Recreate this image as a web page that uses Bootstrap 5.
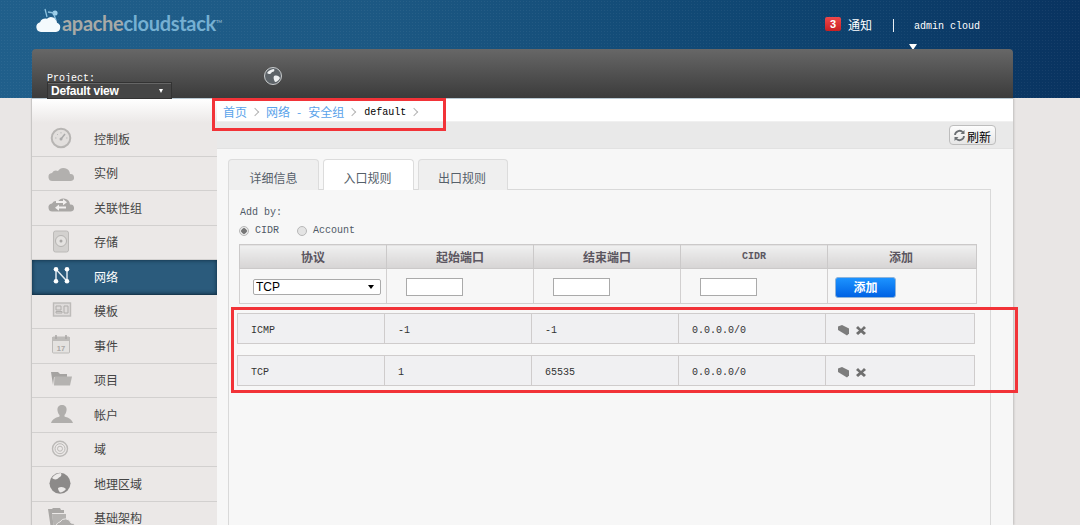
<!DOCTYPE html>
<html lang="zh">
<head>
<meta charset="utf-8">
<title>CloudStack</title>
<link href="https://cdn.jsdelivr.net/npm/bootstrap@5.3.0/dist/css/bootstrap.min.css" rel="stylesheet">
<style>
html,body{height:525px;overflow:hidden}
body{background:#e9e6e5;font-family:"Liberation Sans","Noto Sans CJK SC",sans-serif;font-size:12px;color:#333;position:relative}
.zh{font-family:"Noto Sans CJK SC","Liberation Sans",sans-serif;font-size:12px;line-height:16px}
.mono{font-family:"Liberation Mono","Noto Sans CJK SC",monospace;font-size:10px;line-height:12px}
.topzone{height:98px;background-color:#134a76;background-image:radial-gradient(rgba(255,255,255,.05) 1px,transparent 1px),linear-gradient(90deg,#205f8b 0,#1c5883 35%,#0f4672 70%,#093360 100%);background-size:3px 3px,100% 100%}
.topbar{height:49px;padding-left:36px;padding-right:100px;position:relative}
.logotxt{font-family:"Lato","Liberation Sans",sans-serif;font-weight:700;font-size:20px;letter-spacing:-.3px;line-height:24px;margin-left:1px;margin-top:10px}
.lg-a{color:#a8aaa6}.lg-b{color:#76b0d2}
.lg-tm{font-size:4px;vertical-align:super;color:#8fb5cc;letter-spacing:0}
.nbadge{width:16px;height:14px;padding:0;font-size:11px;line-height:14px;border-radius:2px;background:linear-gradient(#f0484a,#c81f22);color:#fff;margin-right:7px;margin-top:17px}
.ntxt{color:#fff;margin-top:17px}
.sep{color:#fff;margin:19px 20px 0 21px;width:1px;height:13px;background:#e8eef3}
.usr{color:#fff;margin-top:21px}
.usrtri{position:absolute;left:909px;top:44px;width:0;height:0;border-left:4.5px solid transparent;border-right:4.5px solid transparent;border-top:6px solid #fff}
.darkbar{width:981px;height:49px;margin-left:32px;background:linear-gradient(#676767,#3b3b3b);border-radius:4px 4px 0 0;padding-left:15px;padding-top:23px;position:relative}
.prj{color:#fff;height:11px;padding-top:1px}
.prjsel{width:125px;height:17px;margin-top:-1px;background:#454545;border:1px solid #333;color:#fff;font-weight:700;font-size:12px;letter-spacing:-.2px;line-height:15px;padding:1px 0 0 3px;box-shadow:0 1px 0 #666 inset;position:relative;z-index:2}
.prjsel i{display:block;width:0;height:0;border-left:2.5px solid transparent;border-right:2.5px solid transparent;border-top:4px solid #fff;margin-right:8px}
.globe{position:absolute;left:232px;top:18px}
.shell{width:981px;margin-left:32px;height:427px;box-shadow:1px 0 2px rgba(0,0,0,.18),-1px 0 1px rgba(0,0,0,.12)}
.side{width:185px;background:#ebe8e7;padding-top:23px;background-image:linear-gradient(#fff 0,#ebe8e7 24px);background-repeat:no-repeat;background-size:100% 30px;border-top:1px solid #b9c9d3;flex:none}
.nitem{height:34.5px;padding-left:15px;border-bottom:1.5px solid #d2d0cf;color:#444;box-sizing:border-box}
.nitem svg{flex:none}
.nitem span{margin-left:19px}
.nitem.on{background:#2b5b7c;color:#fff;box-shadow:0 0 4px #0e2a3d inset;border-bottom-color:#17384f}
.mainp{flex:1;background:#f7f7f7;min-width:0;overflow:hidden;border-top:1px solid #b9c9d3}
.crumb{height:23px;background:#fff;padding-left:6px;padding-top:3px;border-bottom:1px solid #f0f0f0}
.crumb a{color:#5aa3ea;text-decoration:none;white-space:pre}
.crumb .dash{margin:0 7px}
.crumb .gt{width:6px;height:6px;border-top:1px solid #b5b5b5;border-right:1px solid #b5b5b5;transform:rotate(45deg);margin:0 8px 0 5px}
.crumb .cur{color:#000;font-size:10px;margin-left:1px;position:relative;top:1px}
.tools{height:27px;background:#e9e9e9;border-bottom:1px solid #e2e2e2;padding-right:17px}
.rbtn{width:47px;height:20px;padding:0;border:1px solid #bdbdbd;border-radius:4px;background:linear-gradient(#fdfdfd,#e6e6e6);color:#000;font-size:12px;line-height:18px}
.rbtn b{font-weight:400;position:relative;top:2px}
.rbtn svg{margin-right:1px;margin-left:3px}
.tabsw{padding:10px 0 0 11px}
.tabx{margin:0;padding:0;list-style:none;height:31px;position:relative;z-index:1}
.tabx li{height:31px;border:1px solid #dcdcdc;border-bottom:0;border-radius:4px 4px 0 0;background:#efefef;color:#56606a;text-align:center;line-height:16px;padding-top:10px}
.tabx li+li{margin-left:4px}
.tabx .t1{width:91px}.tabx .t2{width:91px;background:#fff;color:#55606a;padding-right:2px}.tabx .t3{width:90px;padding-right:2px}
.tabbox{width:763px;margin-left:11px;border:1px solid #d9d9d9;margin-top:-1px;height:340px;padding:17px 14px 0 10px;color:#566}
.addby{color:#4f5a66;height:12px;margin-left:1px}
.rads{height:18px;margin-top:3px;color:#4f5a66}
.rad{appearance:none;-webkit-appearance:none;width:10px;height:10px;border-radius:50%;border:1px solid #b8b8b8;background:#e4e4e4;margin:0 6px 0 0;flex:none}
.rad:checked{background:radial-gradient(#777 0,#777 2.5px,#e8e8e8 3px)}
.rad2{margin-left:18px}
.rulet{table-layout:fixed;width:737px;border-collapse:collapse;margin:0}
.rulet th{height:24px;padding:1px 0 0;background:linear-gradient(#f0f0f0,#d6d4d4);border:1px solid #cbc9c9;color:#5b5660;text-align:center;font-weight:700;vertical-align:middle}
.rulet th:last-child{padding-right:2px}
.rulet td{height:35px;padding:2px 0 0;border:1px solid #d2d0d0;border-top:0;vertical-align:middle;background:#f7f7f7}
.tsel{width:128px;height:16px;margin-left:13px;font-size:12px;line-height:14px;border:1px solid #aaa;border-radius:2px;background-color:#fff;padding:0 0 0 2px;color:#000;min-height:0;background-image:url("data:image/svg+xml,%3Csvg xmlns='http://www.w3.org/2000/svg' viewBox='0 0 6 4'%3E%3Cpath d='M0 0h6L3 4z' fill='%23000'/%3E%3C/svg%3E");background-position:right 6px center;background-size:6px 4px;font-family:"Liberation Sans",sans-serif;box-shadow:none}
.tinp{display:block;width:57px;height:18px;margin-left:19px;border:1px solid #aaa;border-radius:0;padding:0;background:#fff;min-height:0}
.addbtn{display:block;width:61px;height:21px;margin-left:7px;padding:0;border:1px solid #8fb4da;border-radius:3px;background:linear-gradient(#1c93ff,#0062e4);color:#fff;font-weight:700;font-size:12px;line-height:18px}
.datat{table-layout:fixed;width:737px;margin:0 0 0 -2px;border-collapse:collapse;background:#f0f0f2}
.datat td{height:30px;padding:5px 0 0 13px;border:1.5px solid #cfcccc;background:#f0f0f2;color:#333;vertical-align:middle}
.datat td:last-child{padding-left:11px;padding-top:2px}
.gap1{margin-top:9px}.gap2{margin-top:11px}
.redbox{position:absolute;border:3px solid #f23338;pointer-events:none;z-index:5}
.rb1{left:212px;top:98px;width:234px;height:33px}
.rb2{left:231px;top:307px;width:787px;height:86px}
</style>
</head>
<body>
<div class="topzone">
  <div class="topbar d-flex">
    <svg width="25" height="26" viewBox="0 0 25 26" class="mt-2" aria-label="logo"><path d="M5 24a5 5 0 0 1-1-9.800 5.500 5.500 0 0 1 7-3.500 6 6 0 0 1 10 4 4.800 4.800 0 0 1-1 9.300z" fill="#f4fafd"/><circle cx="19" cy="5" r="2.600" fill="#9fd0ea"/><path d="M9 1l2 8M12 4l6 1M18 7l2 5" stroke="#8cc2e0" stroke-width="1.300" fill="none"/></svg>
    <div class="logotxt"><span class="lg-a">apache</span><span class="lg-b">cloudstack</span><span class="lg-tm">TM</span></div>
    <div class="ms-auto d-flex align-items-start">
      <span class="badge nbadge">3</span>
      <span class="zh ntxt">通知</span>
      <span class="sep"></span>
      <span class="mono usr">admin cloud</span>
    </div>
    <span class="usrtri"></span>
  </div>
  <div class="darkbar">
    <div class="mono prj">Project:</div>
    <div class="prjsel d-flex align-items-center justify-content-between"><span>Default view</span><i></i></div>
    <svg class="globe" width="18" height="18" viewBox="0 0 18 18" aria-label="globe"><circle cx="9" cy="9" r="8.500" fill="#5d6368"/><circle cx="9" cy="9" r="8.500" fill="none" stroke="#c9cccd"/><path d="M3 6c2-3 5-4 7-4 1 1 0 3-2 3-1 2-3 3-5 1zM10 9c3-1 5 0 6 2-1 2-3 4-5 4-1-2-2-4-1-6z" fill="#eef0f1"/></svg>
  </div>
</div>
<div class="shell d-flex">
  <nav class="side">
    <div class="nitem d-flex align-items-center zh"><svg width="28" height="26" viewBox="0 0 28 26"><circle cx="14" cy="12" r="9.300" fill="#e2dfdd" stroke="#b7b5b3" stroke-width="2"/><path d="M14 13l4-5" stroke="#aaa" stroke-width="1.500"/><circle cx="14" cy="13" r="1.500" fill="#aaa"/><path d="M8 12h1.500M19 12h1.500M14 6v1.500M10 8l1 1" stroke="#bbb"/></svg><span>控制板</span></div>
    <div class="nitem d-flex align-items-center zh"><svg width="28" height="26" viewBox="0 0 28 26"><path d="M6 21a4 4 0 0 1-1-8 5 5 0 0 1 6-2 6.500 6.500 0 0 1 12 3 3.500 3.500 0 0 1 1 7z" fill="#b2b0ae"/></svg><span>实例</span></div>
    <div class="nitem d-flex align-items-center zh"><svg width="28" height="26" viewBox="0 0 28 26"><path d="M6 16.500a4 4 0 0 1-1-8 5 5 0 0 1 6-2 6.500 6.500 0 0 1 12 3 3.500 3.500 0 0 1 1 7z" fill="#a9a7a5"/><path d="M9 7h7V5l4 3.200-4 3V9H9zM19 12.500h-7v-2l-4 3.200 4 3v-2.200h7z" fill="#f2f0ef" transform="translate(0 -1)"/></svg><span>关联性组</span></div>
    <div class="nitem d-flex align-items-center zh"><svg width="28" height="26" viewBox="0 0 28 26"><rect x="6.500" y="2" width="15" height="21" rx="2" fill="#d3d1cf" stroke="#bcbab8"/><circle cx="14" cy="12" r="5.500" fill="#e4e2e0" stroke="#b5b3b1"/><circle cx="14" cy="12" r="1.500" fill="#a9a7a5"/></svg><span>存储</span></div>
    <div class="nitem on d-flex align-items-center zh"><svg width="28" height="26" viewBox="0 0 28 26"><path d="M9 5.300v12M9 5.300l11 12M20 5.300v12" stroke="#dfe9ef" stroke-width="1.500" fill="none"/><g fill="#fff"><circle cx="9" cy="5.300" r="2.300"/><circle cx="20" cy="5.300" r="2.300"/><circle cx="9" cy="17.300" r="2.300"/><circle cx="20" cy="17.300" r="2.300"/></g></svg><span>网络</span></div>
    <div class="nitem d-flex align-items-center zh"><svg width="28" height="26" viewBox="0 0 28 26"><rect x="6.500" y="5" width="17" height="13" fill="#dedbda" stroke="#bdbbb9" stroke-width="1.400"/><path d="M9 8h5v4H9zM17 8h4v7h-4zM9 13.500h6V15H9z" fill="none" stroke="#b0aeac"/></svg><span>模板</span></div>
    <div class="nitem d-flex align-items-center zh"><svg width="28" height="26" viewBox="0 0 28 26"><rect x="5.500" y="4" width="17" height="16" rx="1" fill="#e4e2e0" stroke="#bdbbb9"/><rect x="5" y="4" width="18" height="4" fill="#bdbbb9"/><path d="M9 2v4M19 2v4" stroke="#a9a7a5" stroke-width="1.500"/><text x="14" y="17.500" text-anchor="middle" font-size="7.500" font-weight="700" fill="#a9a7a5" font-family="Liberation Sans">17</text></svg><span>事件</span></div>
    <div class="nitem d-flex align-items-center zh"><svg width="28" height="26" viewBox="0 0 28 26"><path d="M4 5h7l2 2h7v3H7l-1 8z" fill="#a5a3a1"/><path d="M7.500 9.500H25L23 18.500H7z" fill="#b5b3b1"/></svg><span>项目</span></div>
    <div class="nitem d-flex align-items-center zh"><svg width="28" height="26" viewBox="0 0 28 26"><path d="M15 3c3.500 0 5 2.500 4.500 5.500-.3 2-1 3.500-2 4.500v1.500c3 1 7 2 8.500 6.500H4c1.500-4.500 5.500-5.500 8.500-6.500V13c-1-1-1.700-2.500-2-4.500C10 5.500 11.500 3 15 3z" fill="#b0aeac"/></svg><span>帐户</span></div>
    <div class="nitem d-flex align-items-center zh"><svg width="28" height="26" viewBox="0 0 28 26"><g fill="none" stroke="#bbb9b7"><circle cx="13" cy="12.700" r="7.500" stroke-width="1.400"/><circle cx="13" cy="12.700" r="5"/><circle cx="13" cy="12.700" r="2.500"/></g></svg><span>域</span></div>
    <div class="nitem d-flex align-items-center zh"><svg width="28" height="26" viewBox="0 0 28 26"><circle cx="13" cy="12.300" r="10.500" fill="#8c8a89"/><path d="M5 7c2-3 5-4.500 9-5 1 2 0 4-2 4.500-2 2.500-5 2.500-7 .5zM11 17c3-2 6-1 8 1-1.500 2-4 3.500-6 3.500-1-1-2-3-2-4.500z" fill="#eceae9"/></svg><span>地理区域</span></div>
    <div class="nitem d-flex align-items-center zh"><svg width="28" height="26" viewBox="0 0 28 26"><path d="M1 4h4l1-1h7l1 2h3v3H5l2 16H4z" fill="#a9a7a5"/><path d="M5 9h14v15H7z" fill="#b5b3b1"/><path d="M10 25a5 5 0 0 1 3-8 6 6 0 0 1 11 1 4 4 0 0 1 3 7z" fill="#aeacaa" stroke="#ebe8e7"/></svg><span>基础架构</span></div>
  </nav>
  <main class="mainp">
    <div class="crumb d-flex align-items-center zh">
      <a href="#">首页</a><i class="gt"></i><a href="#">网络<span class="dash">-</span>安全组</a><i class="gt"></i><span class="mono cur">default</span><i class="gt"></i>
    </div>
    <div class="tools d-flex align-items-center justify-content-end">
      <button class="btn rbtn d-flex align-items-center zh" type="button"><svg width="13" height="13" viewBox="0 0 13 13"><path d="M2 6a4.500 4.500 0 0 1 8-2.500M11 7a4.500 4.500 0 0 1-8 2.500" fill="none" stroke="#6b6f73" stroke-width="1.800"/><path d="M11.500 1v4h-4zM1.500 12V8h4z" fill="#6b6f73"/></svg><b>刷新</b></button>
    </div>
    <div class="tabsw">
      <ul class="tabx d-flex zh">
        <li class="t1">详细信息</li>
        <li class="t2">入口规则</li>
        <li class="t3">出口规则</li>
      </ul>
    </div>
    <div class="tabbox">
      <div class="mono addby">Add by:</div>
      <div class="d-flex align-items-center rads mono">
        <input class="rad" type="radio" name="ab" checked aria-label="CIDR"><span>CIDR</span>
        <input class="rad rad2" type="radio" name="ab" aria-label="Account"><span>Account</span>
      </div>
      <table class="rulet mt-1">
        <colgroup><col style="width:147px"><col style="width:147px"><col style="width:147px"><col style="width:147px"><col style="width:149px"></colgroup>
        <thead><tr><th class="zh">协议</th><th class="zh">起始端口</th><th class="zh">结束端口</th><th class="mono">CIDR</th><th class="zh">添加</th></tr></thead>
        <tbody><tr>
          <td><select class="form-select tsel" aria-label="协议"><option>TCP</option></select></td>
          <td><input class="form-control tinp" aria-label="起始端口"></td>
          <td><input class="form-control tinp" aria-label="结束端口"></td>
          <td><input class="form-control tinp" aria-label="CIDR"></td>
          <td><button class="btn addbtn zh" type="button">添加</button></td>
        </tr></tbody>
      </table>
      <table class="datat gap1 mono">
        <colgroup><col style="width:147px"><col style="width:147px"><col style="width:147px"><col style="width:147px"><col style="width:149px"></colgroup>
        <tr><td>ICMP</td><td>-1</td><td>-1</td><td>0.0.0.0/0</td><td><svg width="36" height="14" viewBox="0 0 36 14"><path d="M1 3.500l4-1.500 7 3.500v5l-2 2-9-5.500z" fill="#7d7d7d"/><path d="M21 3l3 3 3-3 2 2-3 2.500 3 2.500-2 2-3-2.500-3 2.500-2-2 3-2.500-3-2.500z" fill="#6f6f6f"/></svg></td></tr>
      </table>
      <table class="datat gap2 mono">
        <colgroup><col style="width:147px"><col style="width:147px"><col style="width:147px"><col style="width:147px"><col style="width:149px"></colgroup>
        <tr><td>TCP</td><td>1</td><td>65535</td><td>0.0.0.0/0</td><td><svg width="36" height="14" viewBox="0 0 36 14"><path d="M1 3.500l4-1.500 7 3.500v5l-2 2-9-5.500z" fill="#7d7d7d"/><path d="M21 3l3 3 3-3 2 2-3 2.500 3 2.500-2 2-3-2.500-3 2.500-2-2 3-2.500-3-2.500z" fill="#6f6f6f"/></svg></td></tr>
      </table>
    </div>
  </main>
</div>
<div class="redbox rb1"></div>
<div class="redbox rb2"></div>
<script src="https://cdn.jsdelivr.net/npm/bootstrap@5.3.0/dist/js/bootstrap.bundle.min.js"></script>
</body>
</html>
